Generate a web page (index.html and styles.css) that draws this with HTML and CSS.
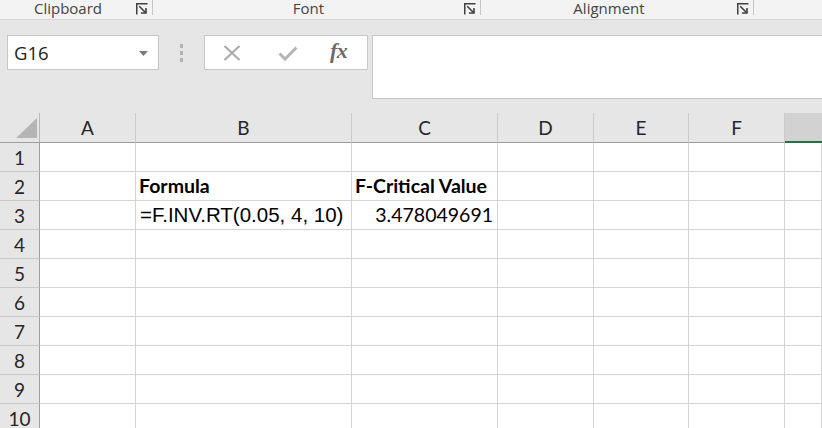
FILE: index.html
```html
<!DOCTYPE html>
<html>
<head>
<meta charset="utf-8">
<link rel="stylesheet" href="styles.css">
</head>
<body>
<div class="ribbon">
  <div class="group g-clip">
    <span class="label">Clipboard</span>
    <svg class="launcher" width="12" height="12" viewBox="0 0 12 12"><path d="M0.75 11.5V0.75H11.5" fill="none" stroke="#404040" stroke-width="1.5"/><path d="M3.2 3.2L9.8 9.8" stroke="#404040" stroke-width="1.6"/><path d="M10 5V10H5" fill="none" stroke="#404040" stroke-width="1.6"/></svg>
    <span class="sep"></span>
  </div>
  <div class="group g-font">
    <span class="label">Font</span>
    <svg class="launcher" width="12" height="12" viewBox="0 0 12 12"><path d="M0.75 11.5V0.75H11.5" fill="none" stroke="#404040" stroke-width="1.5"/><path d="M3.2 3.2L9.8 9.8" stroke="#404040" stroke-width="1.6"/><path d="M10 5V10H5" fill="none" stroke="#404040" stroke-width="1.6"/></svg>
    <span class="sep"></span>
  </div>
  <div class="group g-align">
    <span class="label">Alignment</span>
    <svg class="launcher" width="12" height="12" viewBox="0 0 12 12"><path d="M0.75 11.5V0.75H11.5" fill="none" stroke="#404040" stroke-width="1.5"/><path d="M3.2 3.2L9.8 9.8" stroke="#404040" stroke-width="1.6"/><path d="M10 5V10H5" fill="none" stroke="#404040" stroke-width="1.6"/></svg>
    <span class="sep"></span>
  </div>
</div>

<div class="formula-row">
  <div class="namebox">
    <span class="name">G16</span>
    <svg class="dd" width="9" height="5" viewBox="0 0 9 5"><path d="M0 0H9L4.5 5Z" fill="#7a7a7a"/></svg>
  </div>
  <div class="dots"><span></span><span></span><span></span></div>
  <div class="fxbox">
    <svg class="ico-x" width="18" height="16" viewBox="0 0 18 16"><path d="M1.5 1L16.5 15M16.5 1L1.5 15" stroke="#a9a9a9" stroke-width="2" fill="none"/></svg>
    <svg class="ico-check" width="20" height="15" viewBox="0 0 20 15"><path d="M1.5 7.5L7 13L18.5 1.5" stroke="#b5b5b5" stroke-width="3" fill="none"/></svg>
    <span class="fx">fx</span>
  </div>
  <div class="formula-input"></div>
</div>

<div class="sheet">
  <div class="row head">
    <div class="corner"><svg width="21" height="20" viewBox="0 0 21 20"><path d="M0 20H21V0Z" fill="#b5b5b5"/></svg></div>
    <div class="ch">A</div><div class="ch">B</div><div class="ch">C</div><div class="ch">D</div><div class="ch">E</div><div class="ch">F</div><div class="ch sel"></div>
  </div>
  <div class="row"><div class="rh">1</div><div class="c"></div><div class="c"></div><div class="c"></div><div class="c"></div><div class="c"></div><div class="c"></div><div class="c"></div></div>
  <div class="row"><div class="rh">2</div><div class="c"></div><div class="c bold">Formula</div><div class="c bold">F-Critical Value</div><div class="c"></div><div class="c"></div><div class="c"></div><div class="c"></div></div>
  <div class="row"><div class="rh">3</div><div class="c"></div><div class="c arial">=F.INV.RT(0.05, 4, 10)</div><div class="c num">3.478049691</div><div class="c"></div><div class="c"></div><div class="c"></div><div class="c"></div></div>
  <div class="row"><div class="rh">4</div><div class="c"></div><div class="c"></div><div class="c"></div><div class="c"></div><div class="c"></div><div class="c"></div><div class="c"></div></div>
  <div class="row"><div class="rh">5</div><div class="c"></div><div class="c"></div><div class="c"></div><div class="c"></div><div class="c"></div><div class="c"></div><div class="c"></div></div>
  <div class="row"><div class="rh">6</div><div class="c"></div><div class="c"></div><div class="c"></div><div class="c"></div><div class="c"></div><div class="c"></div><div class="c"></div></div>
  <div class="row"><div class="rh">7</div><div class="c"></div><div class="c"></div><div class="c"></div><div class="c"></div><div class="c"></div><div class="c"></div><div class="c"></div></div>
  <div class="row"><div class="rh">8</div><div class="c"></div><div class="c"></div><div class="c"></div><div class="c"></div><div class="c"></div><div class="c"></div><div class="c"></div></div>
  <div class="row"><div class="rh">9</div><div class="c"></div><div class="c"></div><div class="c"></div><div class="c"></div><div class="c"></div><div class="c"></div><div class="c"></div></div>
  <div class="row"><div class="rh">10</div><div class="c"></div><div class="c"></div><div class="c"></div><div class="c"></div><div class="c"></div><div class="c"></div><div class="c"></div></div>
</div>
</body>
</html>
```

FILE: styles.css
```css
* { box-sizing: border-box; }
html, body { margin: 0; padding: 0; }
body {
  width: 822px;
  height: 428px;
  overflow: hidden;
  background: #e6e6e6;
  font-family: "Lato", "Liberation Sans", sans-serif;
}

/* ribbon group labels */
.ribbon {
  display: flex;
  height: 20px;
  background: #f3f3f3;
  border-bottom: 1px solid #d4d4d4;
}
.group {
  display: flex;
  align-items: flex-start;
  height: 19px;
}
.g-clip { width: 153px; }
.g-font { width: 328px; }
.g-align { width: 273px; }
.label {
  flex: 1;
  text-align: center;
  font-family: "Open Sans", "Noto Sans", sans-serif;
  font-size: 15px;
  line-height: 17px;
  color: #444;
}
.launcher { margin-top: 3px; margin-right: 4px; flex: none; }
.sep {
  width: 1px;
  height: 15px;
  background: #c6c6c6;
  flex: none;
}

/* formula bar */
.formula-row {
  display: flex;
  align-items: flex-start;
  margin-top: 15px;
  height: 64px;
}
.namebox {
  margin-left: 7px;
  width: 152px;
  height: 35px;
  background: #fff;
  border: 1px solid #c6c6c6;
  display: flex;
  align-items: center;
  padding: 0 10px 0 6px;
}
.name {
  flex: 1;
  font-family: "Open Sans", "Noto Sans", sans-serif;
  font-size: 18.5px;
  color: #222;
}
.dd { margin-top: 1px; }
.dots {
  width: 45px;
  height: 35px;
  display: flex;
  flex-direction: column;
  align-items: center;
  justify-content: center;
  gap: 3px;
}
.dots span {
  width: 3px;
  height: 4px;
  background: #b4b4b4;
}
.fxbox {
  width: 164px;
  height: 35px;
  background: #fff;
  border: 1px solid #c6c6c6;
  display: flex;
  align-items: center;
  padding-left: 18px;
}
.ico-x { margin-top: 1px; }
.ico-check { margin-left: 37px; margin-top: 1px; }
.fx {
  margin-left: 32px;
  font-family: "Liberation Serif", "DejaVu Serif", serif;
  font-style: italic;
  font-weight: bold;
  font-size: 22px;
  color: #6c6c6c;
  letter-spacing: -0.5px;
  margin-top: -3px;
}
.formula-input {
  flex: 1;
  margin-left: 4px;
  height: 64px;
  background: #fff;
  border: 1px solid #c6c6c6;
  border-right: none;
}

/* sheet */
.sheet {
  margin-top: 14px;
  background: #fff;
}
.row {
  display: grid;
  grid-template-columns: 40px 96px 216px 146px 96px 95px 96px 1fr;
  height: 29px;
}
.row.head {
  height: 30px;
  background: #e6e6e6;
}
.corner {
  border-right: 1px solid #b9b9b9;
  border-bottom: 1px solid #9e9e9e;
  display: flex;
  justify-content: flex-end;
  align-items: flex-end;
  padding: 0 2px 4px 0;
}
.ch {
  border-right: 1px solid #cbcbcb;
  border-bottom: 1px solid #9e9e9e;
  display: flex;
  justify-content: center;
  align-items: flex-end;
  padding-bottom: 2px;
  font-size: 19px;
  line-height: 24px;
  color: #262626;
}
.ch.sel {
  background: #d2d2d2;
  border-right: none;
  border-bottom: 2px solid #217346;
}
.rh {
  background: #e6e6e6;
  border-right: 1px solid #9e9e9e;
  border-bottom: 1px solid #c8c8c8;
  display: flex;
  justify-content: center;
  align-items: flex-end;
  padding-bottom: 1px;
  font-size: 19px;
  line-height: 24px;
  color: #262626;
}
.c {
  border-right: 1px solid #d4d4d4;
  border-bottom: 1px solid #d4d4d4;
  display: flex;
  align-items: flex-end;
  padding: 0 4px 2px 4px;
  font-size: 19.5px;
  line-height: 24px;
  color: #000;
  white-space: nowrap;
}
.c.bold { font-weight: bold; padding-left: 3px; }
.c.arial {
  font-family: "Liberation Sans", Arial, sans-serif;
  font-size: 20.5px;
}
.c.num { justify-content: flex-end; }
```
